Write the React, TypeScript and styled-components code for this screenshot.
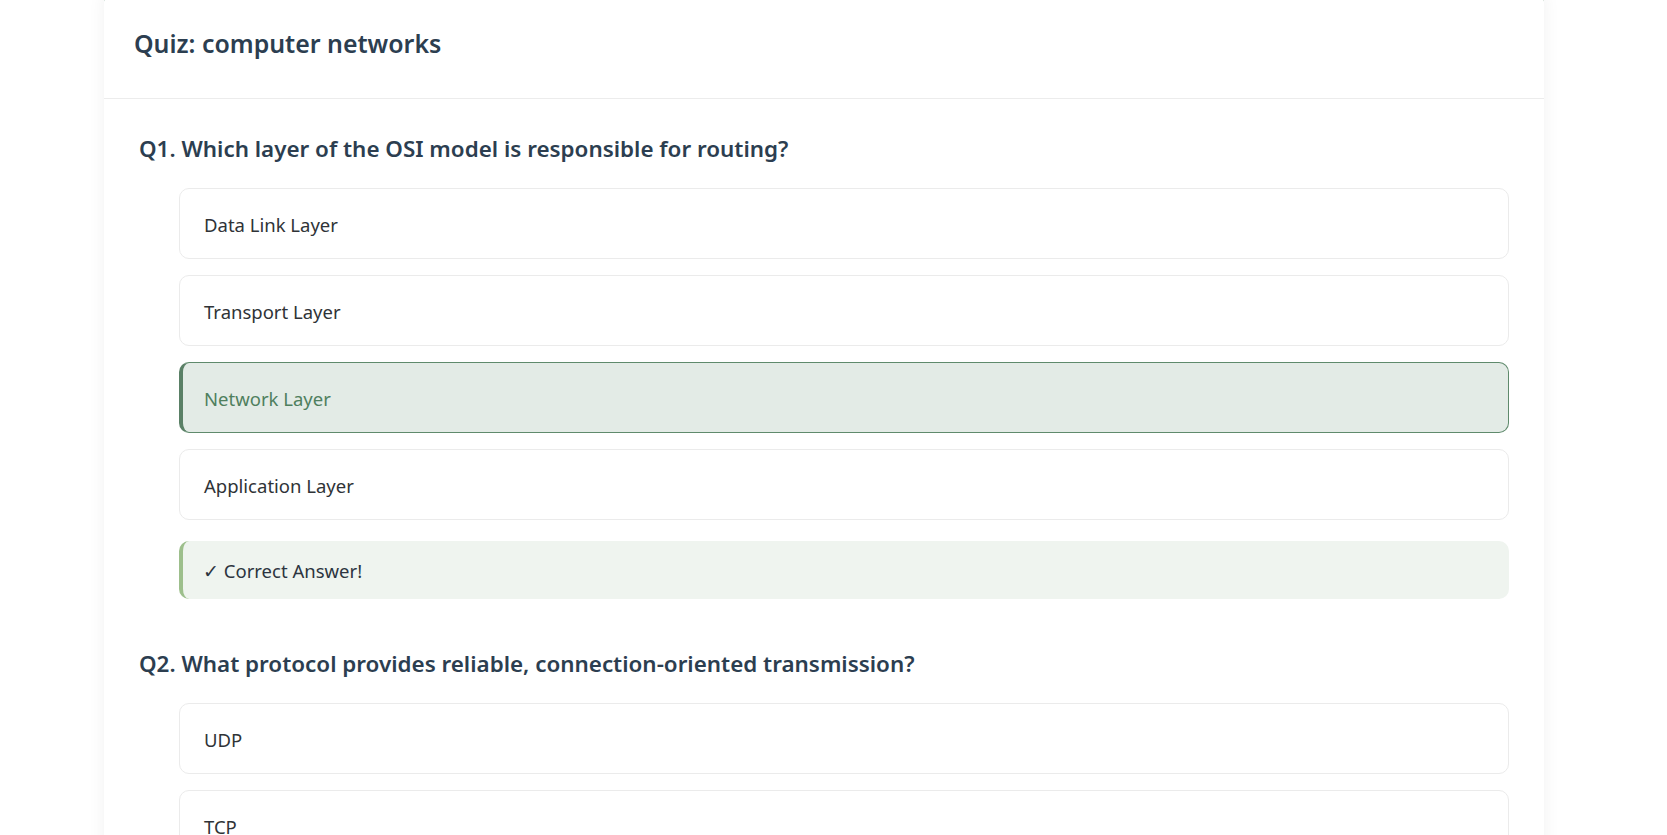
import React from "react";
import styled, { createGlobalStyle } from "styled-components";

const GlobalStyle = createGlobalStyle`
  html, body {
    margin: 0;
    padding: 0;
    background: #ffffff;
    font-family: "Noto Sans", "Open Sans", sans-serif;
    overflow: hidden;
  }
`;

const Page = styled.div`
  padding: 0 19px 0 0;
`;

const Card = styled.div`
  max-width: 1440px;
  margin: -10px auto 0;
  background: #ffffff;
  border-top: 4px solid #5b8a6b;
  border-radius: 12px;
  box-shadow: 0 0 18px rgba(0, 0, 0, 0.06);
  overflow: hidden;
`;

const Header = styled.div`
  padding: 33px 30px 0;
  height: 71px;
  border-bottom: 1px solid #ececec;
`;

const Title = styled.h1`
  margin: 0;
  font-size: 24.9px;
  line-height: 32px;
  font-weight: 600;
  color: #2c3e50;
`;

const Body = styled.div`
  padding: 0 35px;
`;

const Question = styled.section`
  padding-top: 34px;
  & + & {
    padding-top: 49px;
  }
`;

const QuestionText = styled.h2`
  margin: 0 0 23px;
  font-size: 22.4px;
  line-height: 32px;
  font-weight: 600;
  color: #2c3e50;
`;

const Options = styled.div`
  margin-left: 40px;
  display: flex;
  flex-direction: column;
  gap: 16px;
`;

const Option = styled.div<{ $selected?: boolean }>`
  padding: 22px 24px 20px ${(p) => (p.$selected ? "21px" : "24px")};
  font-size: 18.5px;
  line-height: 27px;
  border-radius: 10px;
  border: 1px solid ${(p) => (p.$selected ? "#5f8a6c" : "#ebebeb")};
  border-left: ${(p) => (p.$selected ? "4px solid #5a8066" : "1px solid #ebebeb")};
  background: ${(p) => (p.$selected ? "#e3ebe6" : "#ffffff")};
  color: ${(p) => (p.$selected ? "#4f7f5e" : "#2f3337")};
`;

const Feedback = styled.div`
  margin: 21px 0 0 40px;
  padding: 16px 24px 14px 20px;
  font-size: 18.5px;
  line-height: 28px;
  border-radius: 10px;
  border-left: 4px solid #9dbf8c;
  background: #eff4ef;
  color: #2c3440;
`;

const questions = [
  {
    q: "Q1. Which layer of the OSI model is responsible for routing?",
    options: ["Data Link Layer", "Transport Layer", "Network Layer", "Application Layer"],
    selected: 2,
    feedback: "✓ Correct Answer!",
  },
  {
    q: "Q2. What protocol provides reliable, connection-oriented transmission?",
    options: ["UDP", "TCP", "IP", "ICMP"],
    selected: -1,
    feedback: "",
  },
];

export default function App() {
  return (
    <Page>
      <GlobalStyle />
      <Card>
        <Header>
          <Title>Quiz: computer networks</Title>
        </Header>
        <Body>
          {questions.map((item) => (
            <Question key={item.q}>
              <QuestionText>{item.q}</QuestionText>
              <Options>
                {item.options.map((o, i) => (
                  <Option key={o} $selected={i === item.selected}>
                    {o}
                  </Option>
                ))}
              </Options>
              {item.feedback && <Feedback>{item.feedback}</Feedback>}
            </Question>
          ))}
        </Body>
      </Card>
    </Page>
  );
}
